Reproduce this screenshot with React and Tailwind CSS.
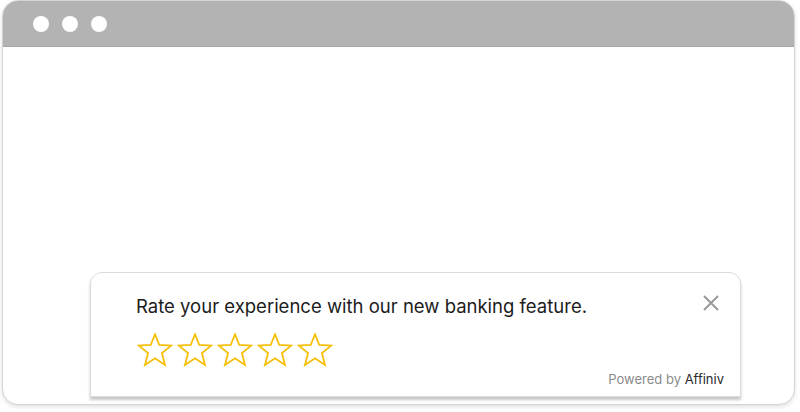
import React from "react";

function Star() {
  return (
    <svg width="36" height="34" viewBox="0 0 36 34" fill="none">
      <path
        d="M18 1.2 L22.3 12 L34.2 12.6 L24.9 20.1 L28 32 L18 25.3 L8 32 L11.1 20.1 L1.8 12.6 L13.7 12 Z"
        stroke="#F5BF0A"
        strokeWidth="1.8"
        strokeLinejoin="miter"
      />
    </svg>
  );
}

export default function App() {
  return (
    <div className="w-[800px] h-[412px] bg-white" style={{ fontFamily: "Inter, 'Noto Sans', sans-serif" }}>
      <div className="ml-[2px] w-[793px] h-[405px] rounded-[16px] border border-[#d4d4d4] shadow-[0_2px_4px_rgba(0,0,0,0.12)] overflow-hidden flex flex-col bg-white">
        <div className="h-[46px] shrink-0 bg-[#b3b3b3] border-b border-[#a6a6a6] flex items-center gap-[13px] pl-[30px]">
          <div className="w-[16px] h-[16px] rounded-full bg-white" />
          <div className="w-[16px] h-[16px] rounded-full bg-white" />
          <div className="w-[16px] h-[16px] rounded-full bg-white" />
        </div>
        <div className="flex-1 flex flex-col justify-end pl-[87px] pb-[7px]">
          <div className="w-[651px] h-[125px] rounded-t-[12px] border border-[#dcdcdc] bg-white shadow-[0_3px_3px_rgba(0,0,0,0.22)] flex flex-col pl-[45px] pr-[16px] pt-[20px]">
            <div className="flex items-start justify-between">
              <div className="text-[18.5px] leading-[26px] text-[#1c1c1c]">
                Rate your experience with our new banking feature.
              </div>
              <svg width="18" height="18" viewBox="0 0 18 18" className="mt-[1px] mr-[4px]">
                <path d="M2 2 L16 16 M16 2 L2 16" stroke="#9a9a9a" strokeWidth="2" />
              </svg>
            </div>
            <div className="flex gap-[4px] mt-[14px] ml-[1px]">
              <Star />
              <Star />
              <Star />
              <Star />
              <Star />
            </div>
            <div className="flex justify-end mt-[3px] text-[13px] leading-[18px]">
              <span className="text-[#8a8a8a]">Powered by&nbsp;</span>
              <span className="text-[#2a2a2a]">Affiniv</span>
            </div>
          </div>
        </div>
      </div>
    </div>
  );
}
